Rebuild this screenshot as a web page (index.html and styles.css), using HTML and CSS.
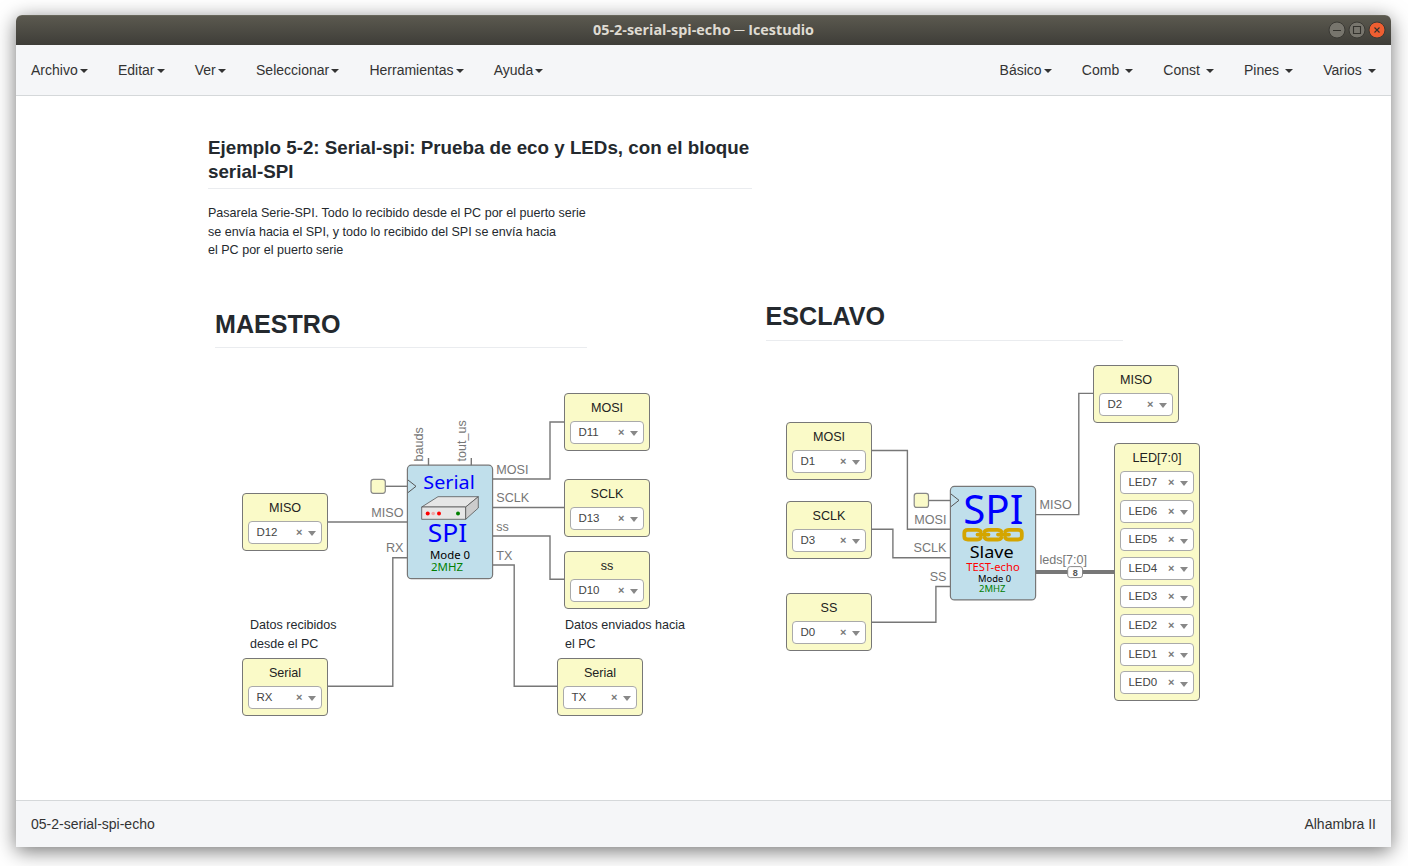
FILE: index.html
```html
<!DOCTYPE html>
<html lang="es">
<head>
<meta charset="utf-8">
<title>05-2-serial-spi-echo ─ Icestudio</title>
<link rel="stylesheet" href="styles.css">
</head>
<body>
<div class="window">
  <header class="titlebar">
    <svg class="title" width="224" height="20"><text x="1" y="15" textLength="221" lengthAdjust="spacingAndGlyphs">05-2-serial-spi-echo ─ Icestudio</text></svg>
    <div class="controls">
      <svg class="ctl" viewBox="0 0 18 18"><circle cx="9" cy="9" r="8"/><path d="M5 9.5H13"/></svg>
      <svg class="ctl" viewBox="0 0 18 18"><circle cx="9" cy="9" r="8"/><path d="M5.5 5.5H12.5V12.5H5.5Z"/></svg>
      <svg class="ctl close" viewBox="0 0 18 18"><circle cx="9" cy="9" r="8"/><path d="M6.5 6.5L11.5 11.5M11.5 6.5L6.5 11.5"/></svg>
    </div>
  </header>
  <nav class="menubar">
    <ul class="menu">
      <li>Archivo<i class="caret"></i></li>
      <li>Editar<i class="caret"></i></li>
      <li>Ver<i class="caret"></i></li>
      <li>Seleccionar<i class="caret"></i></li>
      <li>Herramientas<i class="caret"></i></li>
      <li>Ayuda<i class="caret"></i></li>
    </ul>
    <ul class="menu">
      <li>Básico<i class="caret"></i></li>
      <li>Comb <i class="caret"></i></li>
      <li>Const <i class="caret"></i></li>
      <li>Pines <i class="caret"></i></li>
      <li>Varios <i class="caret"></i></li>
    </ul>
  </nav>
  <main class="canvas">
    <svg class="wires" viewBox="16 96 1375 704" width="1375" height="704">
      <g class="wire">
        <path d="M493 479H550V422H565"/>
        <path d="M493 507.5H565"/>
        <path d="M493 536H550V579.3H565"/>
        <path d="M493 565H514.2V686.3H558"/>
        <path d="M327 522H408"/>
        <path d="M327 686.3H392.8V557.7H408"/>
        <path d="M385 486.3H408"/>
        <path d="M428.5 458V466M471.3 458V466"/>
        <path d="M871 450.5H907.4V529.2H951"/>
        <path d="M871 529.2H892.9V557.8H951"/>
        <path d="M871 622.2H935.9V586.5H951"/>
        <path d="M1035 514.6H1078.8V393.4H1094"/>
        <path d="M928 500.5H951"/>
        <path class="bus" d="M1035 572H1115"/>
      </g>
      <g class="clock"><rect x="371" y="479.3" width="14.3" height="14" rx="2.5"/><rect x="914.2" y="493.4" width="14.3" height="14" rx="2.5"/></g>
      <g class="chip"><rect x="407.4" y="465.2" width="85.2" height="113.5" rx="4"/><rect x="950.4" y="486.4" width="85.2" height="113.5" rx="4"/></g>
      <path class="edge" d="M408 480L416 486.3L408 492.6M951 494L959 500.3L951 506.6"/>
      <rect class="badge" x="1067.7" y="566.6" width="14.8" height="11" rx="2.5"/>
      <text class="badge-text" x="1075.2" y="575.6">8</text>
      <g class="port">
        <text x="496.3" y="474">MOSI</text><text x="496.3" y="502">SCLK</text><text x="496.3" y="531">ss</text><text x="496.3" y="560">TX</text>
        <text x="1039.5" y="509">MISO</text><text x="1039.5" y="564">leds[7:0]</text>
        <text transform="translate(423 461.5) rotate(-90)">bauds</text>
        <text transform="translate(466 461.5) rotate(-90)">tout_us</text>
      </g>
      <g class="port end">
        <text x="403.5" y="517">MISO</text><text x="403.5" y="552">RX</text>
        <text x="946.5" y="524">MOSI</text><text x="946.5" y="552">SCLK</text><text x="946.5" y="581">SS</text>
      </g>
      <g class="device">
        <path class="box" d="M421.7 507L438 496.7H478.3L465.7 507Z"/>
        <path class="box" d="M421.7 507H465.7V519.3H421.7Z"/>
        <path class="side" d="M465.7 507L478.3 496.7V508L465.7 519.3Z"/>
        <circle class="red" cx="427.7" cy="513.5" r="2"/><circle class="pink" cx="433.2" cy="513.5" r="1.8"/><circle class="red" cx="439" cy="513.5" r="2"/><circle class="green" cx="458" cy="513.5" r="2"/>
      </g>
      <g class="chip-text">
        <text class="blue s19" x="423.3" y="488.5" textLength="51.5" lengthAdjust="spacingAndGlyphs">Serial</text>
        <text class="blue s26" x="427.7" y="542.4" textLength="39.5" lengthAdjust="spacingAndGlyphs">SPI</text>
        <text class="s11" x="430" y="558.7" textLength="40" lengthAdjust="spacingAndGlyphs">Mode 0</text>
        <text class="green s11" x="431" y="571" textLength="32" lengthAdjust="spacingAndGlyphs">2MHZ</text>
        <text class="blue s40" x="963.3" y="523.7" textLength="60" lengthAdjust="spacingAndGlyphs">SPI</text>
        <text class="s17" x="969.7" y="557.5" textLength="44" lengthAdjust="spacingAndGlyphs">Slave</text>
        <text class="red s11" x="966.2" y="570.8" textLength="53.5" lengthAdjust="spacingAndGlyphs">TEST-echo</text>
        <text class="s9" x="978" y="581.8" textLength="33" lengthAdjust="spacingAndGlyphs">Mode 0</text>
        <text class="green s9" x="979" y="592" textLength="26.5" lengthAdjust="spacingAndGlyphs">2MHZ</text>
      </g>
      <g class="chain">
        <path d="M980.8 531.6Q979.8 529.8 977 529.8H968Q964.3 529.8 964.3 533V536.5Q964.3 539.5 968 539.5H977Q979.8 539.5 980.8 537.6"/>
        <path d="M984.6 531.6Q985.6 529.8 988.5 529.8H997.5Q1000.4 529.8 1001.4 531.6M984.6 537.6Q985.6 539.5 988.5 539.5H997.5Q1000.4 539.5 1001.4 537.6"/>
        <path d="M1005.2 531.6Q1006.2 529.8 1009 529.8H1018Q1021.8 529.8 1021.8 533V536.5Q1021.8 539.5 1018 539.5H1009Q1006.2 539.5 1005.2 537.6"/>
        <path d="M977.5 534.6H988.5M998 534.6H1009"/>
      </g>
    </svg>

    <section class="note intro">
      <h2>Ejemplo 5-2: Serial-spi: Prueba de eco y LEDs, con el bloque serial-SPI</h2>
      <p>Pasarela Serie-SPI. Todo lo recibido desde el PC por el puerto serie<br>se envía hacia el SPI, y todo lo recibido del SPI se envía hacia<br>el PC por el puerto serie</p>
    </section>
    <h1 class="note master">MAESTRO</h1>
    <h1 class="note slave">ESCLAVO</h1>
    <p class="note received">Datos recibidos<br>desde el PC</p>
    <p class="note sent">Datos enviados hacia<br>el PC</p>

    <div class="node m-mosi"><span>MOSI</span><div class="select">D11<b></b></div></div>
    <div class="node m-sclk"><span>SCLK</span><div class="select">D13<b></b></div></div>
    <div class="node m-ss"><span>ss</span><div class="select">D10<b></b></div></div>
    <div class="node m-miso"><span>MISO</span><div class="select">D12<b></b></div></div>
    <div class="node m-rx"><span>Serial</span><div class="select">RX<b></b></div></div>
    <div class="node m-tx"><span>Serial</span><div class="select">TX<b></b></div></div>
    <div class="node s-mosi"><span>MOSI</span><div class="select">D1<b></b></div></div>
    <div class="node s-sclk"><span>SCLK</span><div class="select">D3<b></b></div></div>
    <div class="node s-ss"><span>SS</span><div class="select">D0<b></b></div></div>
    <div class="node s-miso"><span>MISO</span><div class="select">D2<b></b></div></div>
    <div class="node s-led"><span>LED[7:0]</span>
      <div class="select">LED7<b></b></div><div class="select">LED6<b></b></div><div class="select">LED5<b></b></div><div class="select">LED4<b></b></div>
      <div class="select">LED3<b></b></div><div class="select">LED2<b></b></div><div class="select">LED1<b></b></div><div class="select">LED0<b></b></div>
    </div>
  </main>
  <footer class="statusbar"><span>05-2-serial-spi-echo</span><span>Alhambra II</span></footer>
</div>
</body>
</html>
```
FILE: styles.css
```css
* { box-sizing: border-box; }
body { margin: 0; height: 866px; padding: 15px 17px 19px 16px; overflow: hidden; background: #fff; font-family: "Liberation Sans", Arial, sans-serif; }
.window { height: 832px; display: flex; flex-direction: column; border-radius: 6px 6px 0 0; background: #fff; box-shadow: 0 4px 20px rgba(0,0,0,.55); overflow: hidden; }
.titlebar { height: 30px; flex: none; display: grid; grid-template-columns: 1fr auto 1fr; align-items: center; padding-bottom: 1px; background: linear-gradient(#5b594f, #3e3d38); border-top: 1px solid #67665a; }
.title { grid-column: 2; font: bold 14px "Open Sans", "Noto Sans", sans-serif; fill: #dfdbd2; }
.controls { display: flex; gap: 2px; justify-content: flex-end; padding-right: 5px; }
.ctl { width: 18px; height: 18px; fill: #77756d; stroke: #3a3934; stroke-width: 1; }
.ctl.close { fill: #ee5e31; }
.ctl path { fill: none; stroke: #33322d; stroke-width: 1.1; }
.menubar { height: 51px; flex: none; display: flex; justify-content: space-between; align-items: center; background: #f5f6f8; border-bottom: 1px solid #d5d8da; font-size: 14px; color: #333; }
.menu { display: flex; list-style: none; margin: 0; padding: 0; }
.menu li { padding: 0 15px; white-space: pre; line-height: 20px; }
.caret { display: inline-block; margin-left: 2.25px; vertical-align: middle; border: 4px solid transparent; border-top-color: #333; border-bottom: 0; }
.canvas { position: relative; flex: 1; color: #24292e; }
.wires { position: absolute; left: 0; top: 0; }
.wire { fill: none; stroke: #777; stroke-width: 1.4; }
.bus { stroke-width: 4; }
.clock rect { fill: #fafac8; stroke: #888; stroke-width: 1.2; }
.chip rect { fill: #c0dfeb; stroke: #777; stroke-width: 1.2; }
.edge { fill: none; stroke: #555; stroke-width: 1; }
.badge { fill: #fff; stroke: #888; }
.badge-text { font-size: 9px; font-weight: bold; text-anchor: middle; fill: #555; }
.port { font-size: 12.6px; fill: #777; }
.end { text-anchor: end; }
.device { stroke: #555; stroke-width: .8; }
.box { fill: #e6e6e6; }
.side { fill: #ccc; }
.device circle { stroke: none; }
.red { fill: #f00; }
.pink { fill: #f3a3a3; }
.green { fill: #008000; }
.chip-text { font-family: "Noto Sans", "Open Sans", sans-serif; }
.blue { fill: #00f; }
.s9 { font-size: 9px; }
.s11 { font-size: 10.7px; }
.s17 { font-size: 17px; }
.s19 { font-size: 18.5px; }
.s26 { font-size: 26px; }
.s40 { font-size: 40px; }
.chain { fill: none; stroke: #d4a500; stroke-width: 3.8; stroke-linecap: round; }
.note { position: absolute; margin: 0; font-size: 12.55px; line-height: 18.7px; white-space: nowrap; }
.intro { left: 192px; top: 40px; width: 544px; }
.intro h2 { margin: 0; padding-bottom: 4px; font-size: 18.78px; line-height: 24px; white-space: normal; border-bottom: 1px solid #eaecef; }
.intro p { margin: 15px 0 0; }
h1.note { height: 40px; font-size: 25.1px; line-height: 31px; border-bottom: 1px solid #eaecef; }
.master { left: 199px; top: 212px; width: 372px; padding-top: 1px; }
.slave { left: 749.6px; top: 205px; width: 357px; }
.received { left: 234px; top: 520px; }
.sent { left: 549px; top: 520px; }
.node { position: absolute; width: 86px; height: 58px; padding: 6px 5px 5px; display: flex; flex-direction: column; gap: 5.6px; background: #fafac8; border: 1px solid #777; border-radius: 4px; color: #222; }
.node > span { height: 15.4px; font-size: 12.6px; line-height: 17px; text-align: center; }
.select { flex: none; display: flex; align-items: center; justify-content: space-between; height: 23px; padding: 0 5px 1px 7.4px; border: 1px solid #aaa; border-radius: 4px; background: #fff; font-size: 11.5px; color: #444; }
.select b { display: flex; align-items: center; gap: 5.5px; }
.select b::before { content: "×"; font-size: 11px; line-height: 14px; font-weight: bold; color: #777; }
.select b::after { content: ""; margin-top: 4px; border: 4px solid transparent; border-top: 5px solid #888; border-bottom: 0; }
.m-mosi { left: 548px; top: 297px; }
.m-sclk { left: 548px; top: 383px; }
.m-ss { left: 548px; top: 455px; }
.m-miso { left: 226px; top: 397px; }
.m-rx { left: 226px; top: 562px; }
.m-tx { left: 541px; top: 562px; }
.s-mosi { left: 770px; top: 326px; }
.s-sclk { left: 770px; top: 405px; }
.s-ss { left: 770px; top: 497px; }
.s-miso { left: 1077px; top: 269px; }
.s-led { left: 1098px; top: 347px; height: 258px; }
.statusbar { height: 47px; flex: none; display: flex; justify-content: space-between; align-items: center; padding: 0 15px; background: #f5f6f8; border-top: 1px solid #d5d8da; font-size: 14px; color: #333; }
```
